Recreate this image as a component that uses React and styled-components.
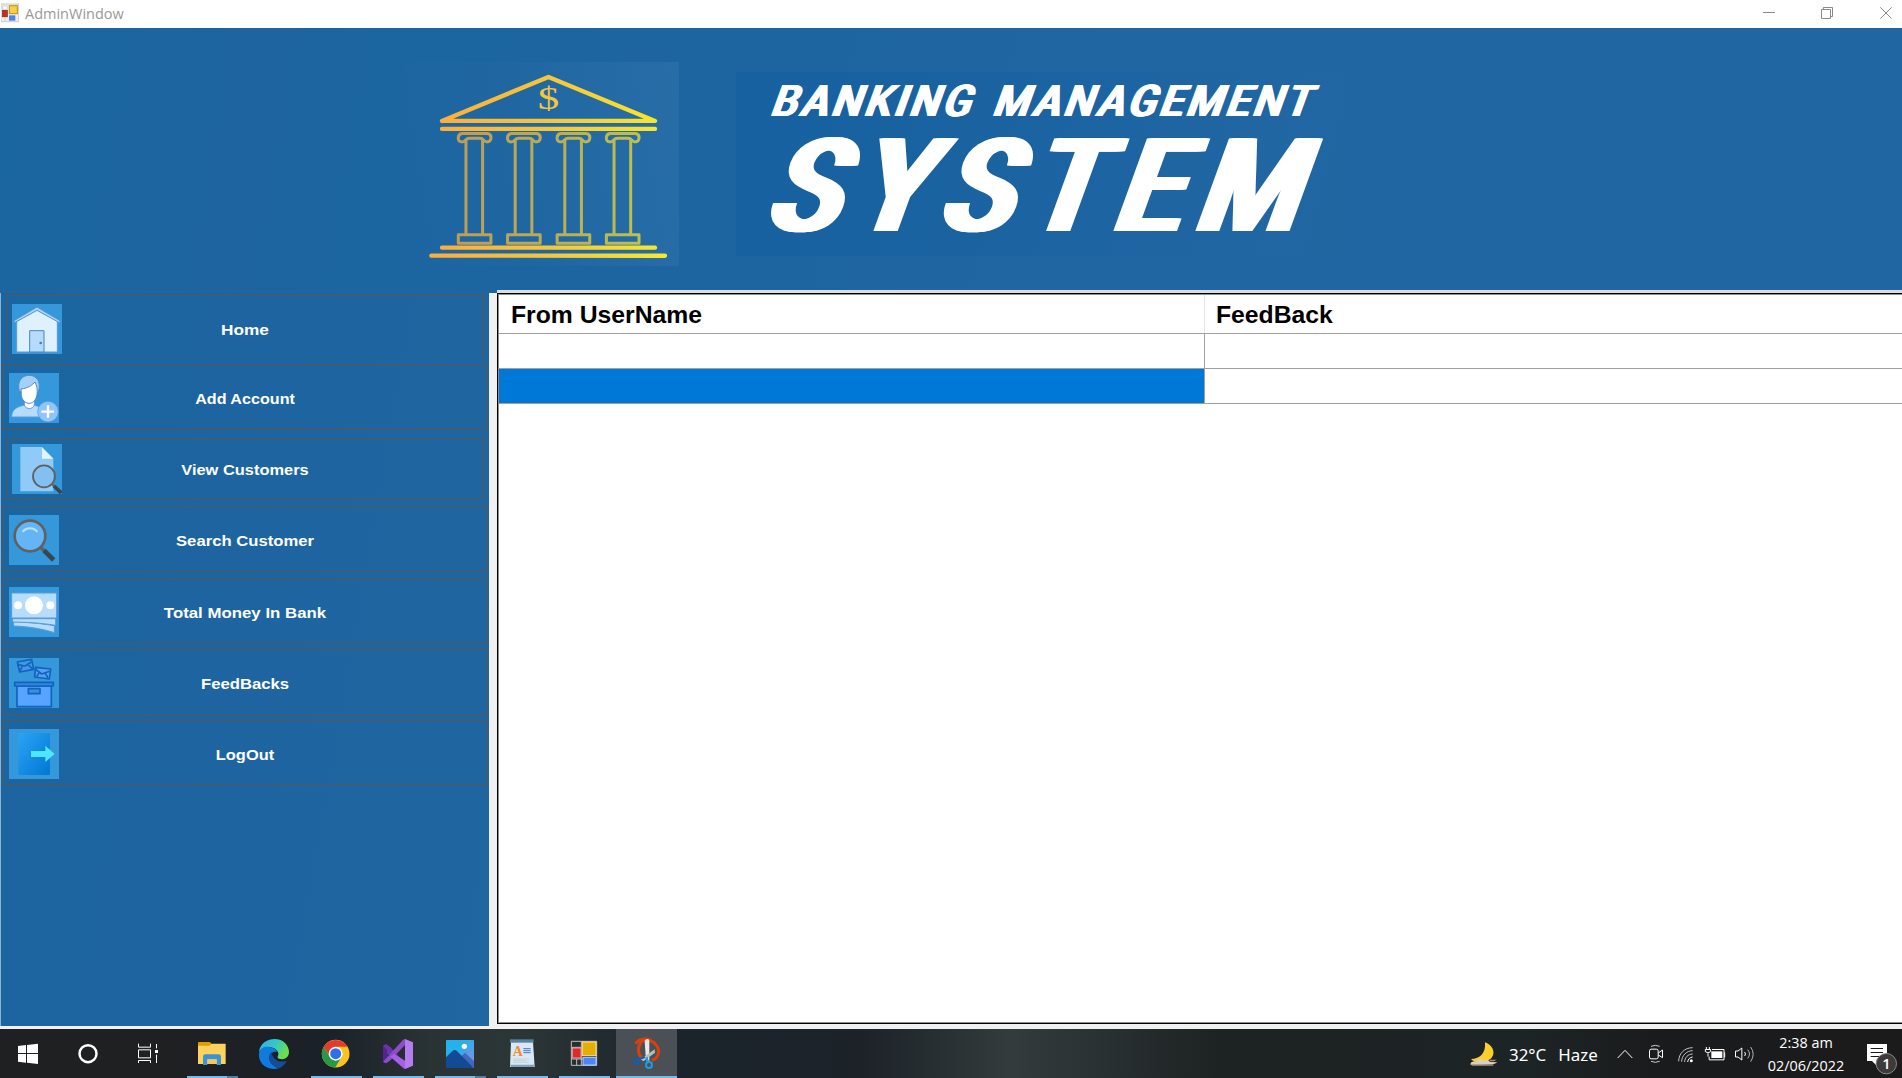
import React from "react";
import styled, { createGlobalStyle } from "styled-components";

const GlobalStyle = createGlobalStyle`
  html, body { margin: 0; padding: 0; overflow: hidden; }
  * { box-sizing: border-box; }
`;

const Desktop = styled.div`
  width: 1902px;
  height: 1078px;
  display: flex;
  flex-direction: column;
  overflow: hidden;
  background: #f0f0f0;
  font-family: "Liberation Sans", Arial, sans-serif;
`;

const TitleBar = styled.header`
  height: 28px;
  flex: none;
  display: flex;
  align-items: flex-start;
  background: #fff;
  padding-left: 1px;
`;

const TitleText = styled.span`
  margin-left: 6px;
  flex: 1;
  font: 400 14.5px/27px "Open Sans", "Noto Sans", sans-serif;
  color: #999;
`;

const Banner = styled.section`
  height: 262px;
  flex: none;
  display: flex;
  align-items: flex-start;
  padding: 34px 0 0 404px;
  background: linear-gradient(100deg, #1a66a1 0%, #1d64a0 14%, #1b65a0 20%, #1c65a1 35%, #2066a2 60%, #2066a2 100%);
`;

const BankArt = styled.svg`
  width: 275px;
  height: 204px;
  flex: none;
  display: block;
  background: linear-gradient(80deg, #1c65a0, #2067a2 45%, #286da6);
`;

const TitlePanel = styled.div`
  margin: 10px 0 0 57px;
  width: 608px;
  height: 184px;
  padding: 14px 0 0 28px;
  background: linear-gradient(105deg, #1761a0, #1b63a1 50%, #2066a3 80%, #2067a2);
  color: #fff;
  font-family: Roboto, sans-serif;
  white-space: nowrap;
`;

const Skewed = styled.div`
  width: max-content;
  transform-origin: 0 100%;
  transform: skewX(-20deg) scaleX(${(p) => p.$sx});
`;

const TopLine = styled(Skewed)`
  margin-left: 5px;
  height: 31px;
  font-size: 43.6px;
  line-height: 31px;
  font-weight: 500;
  letter-spacing: 4.3px;
  word-spacing: 5px;
  text-shadow: 0.8px 0 #fff, 1.6px 0 #fff, -0.8px 0 #fff, -1.5px 0 #fff;
`;

const BigLine = styled(Skewed)`
  margin: 23px 0 0 -1px;
  height: 93px;
  font-size: 130px;
  line-height: 93px;
  font-weight: 500;
  letter-spacing: 18.5px;
  text-shadow: 2px 0 #fff, 4px 0 #fff, 5.5px 0 #fff, -2px 0 #fff, -4px 0 #fff, -5.5px 0 #fff;
`;

const Body = styled.main`
  height: 739px;
  flex: none;
  display: flex;
  background: linear-gradient(#1f66a1 0 3px, #f0f0f0 3px);
`;

const Sidebar = styled.nav`
  width: 489px;
  height: 733px;
  flex: none;
  margin-top: 3px;
  padding: 2px 0 0 2px;
  border-left: 1px solid #8fb2d0;
  background: linear-gradient(100deg, #1a65a0, #1d64a0 40%, #2066a1);
`;

const MenuButton = styled.button`
  display: grid;
  grid-template-columns: 50px 1fr 50px;
  align-items: start;
  width: ${(p) => (p.$inset ? 478 : 484)}px;
  height: ${(p) => p.$h}px;
  margin: ${(p) => p.$mt}px 0 0 ${(p) => (p.$inset ? 3 : 0)}px;
  padding: ${(p) => p.$pt}px 5px 0;
  border: 1px solid #585755;
  ${(p) => p.$open && "border-bottom-color: transparent;"}
  background: transparent;
  color: #fff;
`;

const MenuIcon = styled.svg`
  width: 50px;
  height: 50px;
  display: block;
  background: #3498db;
`;

const MenuLabel = styled.span`
  font: 700 15.5px/52px "Liberation Sans", Arial, sans-serif;
  text-align: center;
  white-space: nowrap;
  transform: scaleX(${(p) => p.$sx});
`;

const GridFrame = styled.section`
  flex: 1;
  height: 734px;
  margin-left: 8px;
  border-top: 3px solid #d9dee2;
`;

const GridEdge = styled.div`
  height: 731px;
  border: solid #000;
  border-width: 1px 0 1px 1px;
`;

const DataGrid = styled.div`
  height: 729px;
  border: solid #8c8c8c;
  border-width: 1px 0 1px 1px;
  background: #fff;
`;

const GridRow = styled.div`
  display: grid;
  grid-template-columns: 706px 1fr;
  height: ${(p) => (p.$head ? 39 : 35)}px;
  border-bottom: 1px solid #a0a0a0;
`;

const Cell = styled.div`
  background: ${(p) => (p.$selected ? "#0078d7" : "#fff")};
  border-right: ${(p) => (p.$last ? "0" : p.$head ? "1px solid #e5e5e5" : "1px solid #a0a0a0")};
  padding: 1px 0 0 ${(p) => (p.$last ? 11 : 12)}px;
  font: 700 24px/37px "Liberation Sans", Arial, sans-serif;
  color: #000;
`;

const HeadText = styled.span`
  display: block;
  width: max-content;
  height: 37px;
  transform-origin: 0 50%;
  transform: scaleX(1.03);
`;

const Taskbar = styled.footer`
  height: 49px;
  flex: none;
  display: flex;
  background: linear-gradient(90deg, #1f2021 0, #1e2022 180px, #1b2129 330px, #2a3334 430px, #2c3636 520px, #1b242c 660px, #1c2228 860px, #333b3c 1010px, #2a3132 1100px, #1d2222 1220px, #1d2425 1530px, #1a1b1c 1660px, #1b1b1c 1902px);
`;

const Slot = styled.div`
  width: ${(p) => p.$w}px;
  height: 49px;
  flex: none;
  margin-left: ${(p) => (p.$active ? 1 : 0)}px;
  display: flex;
  flex-direction: column;
  background: ${(p) => (p.$active ? "#4b5056" : "transparent")};
`;

const SlotIcon = styled.svg`
  width: 100%;
  height: 47px;
  display: block;
`;

const Underline = styled.div`
  height: 2px;
  width: ${(p) => (p.$full ? 61 : 51)}px;
  margin-left: ${(p) => (p.$full ? 0 : 6)}px;
  background: ${(p) => (p.$split ? "linear-gradient(90deg, #76b9ed 40px, #4f7da3 40px)" : "#76b9ed")};
`;

const Spacer = styled.div`
  flex: 1;
`;

const Weather = styled.div`
  display: flex;
  gap: 12px;
  width: 102px;
  font: 400 16.9px/49px "Noto Sans", "Open Sans", sans-serif;
  color: #fff;
  padding: 1px 0 0 1px;
  white-space: nowrap;
`;

const Clock = styled.div`
  width: 84px;
  padding-top: 2px;
  font: 400 14.4px/23px "Open Sans", "Noto Sans", sans-serif;
  color: #fff;
  text-align: center;
  white-space: nowrap;
`;

const WinFormsGlyph = ({ x = 0, y = 0 }) => (
  <g transform={`translate(${x} ${y})`}>
    <path d="M1 1H77V73H1ZM31 1V73M1 19H31M1 54H77M17 54V73" fill="none" stroke="#bdbdbd" strokeWidth="3" />
    <rect x="4" y="21" width="26" height="30" fill="#d92b2b" stroke="#e9a0a0" strokeWidth="3" />
    <rect x="34" y="3" width="41" height="41" fill="#e2ae08" stroke="#ffe28a" strokeWidth="3" />
    <rect x="36" y="49" width="39" height="23" fill="#4f86f7" stroke="#b5ccff" strokeWidth="3" />
  </g>
);

const column = (x) =>
  `M${x + 14} 250h76c16 2 14 25 0 25c-10 1-10-11-22-11h-32c-12 0-12 12-22 11c-16 0-14-23 0-25z` +
  `M${x + 26} 272V553M${x + 76} 272V553M${x + 3} 554h98v26h-98z`;

const BankLogo = () => (
  <BankArt viewBox="12 35 826 613">
    <defs>
      <linearGradient id="gold" gradientUnits="userSpaceOnUse" x1="90" y1="0" x2="800" y2="0">
        <stop offset="0" stopColor="#fcac3c" />
        <stop offset="0.5" stopColor="#f6c63a" />
        <stop offset="1" stopColor="#f6ea2c" />
      </linearGradient>
    </defs>
    <g fill="none" stroke="url(#gold)" strokeLinecap="round" strokeLinejoin="round">
      <path strokeWidth="13" d="M126 212L446 80L766 212H126.1M126 236H766.1M126 593H766.1" />
      <path strokeWidth="13" d="M94 617L796 617.1" />
      <path strokeWidth="9" opacity="0.72" d={[172, 320, 469, 617].map(column).join("")} />
    </g>
    <text x="446" y="177" textAnchor="middle" fontFamily="Liberation Serif, serif" fontSize="92" transform="translate(446 0) scale(1.4 1) translate(-446 0)" fill="url(#gold)">$</text>
  </BankArt>
);

const icons = {
  home: (
    <>
      <path d="M14 50L75 14L136 50V144H14Z" fill="#dff0ff" stroke="#5b9bdc" strokeWidth="3" />
      <path d="M6 50L75 9L144 50V57L75 19L6 57Z" fill="#a9d3fb" stroke="#5291d3" strokeWidth="3" />
      <path d="M53 144V80H96V144Z" fill="#b5dbff" stroke="#4586c8" strokeWidth="3" />
      <circle cx="86" cy="117" r="4" fill="#3f7fc4" />
    </>
  ),
  add: (
    <>
      <path d="M8 132C8 112 20 102 44 97H76C100 102 110 112 112 132Z" fill="#b5dbff" stroke="#5d9cdd" strokeWidth="3" />
      <path d="M46 80H76V96C72 110 50 110 46 96Z" fill="#fff" stroke="#5d9cdd" strokeWidth="3" />
      <path d="M31 56C22 22 42 6 62 7C82 8 98 24 88 58Z" fill="#a5d0f8" stroke="#4c8ccb" strokeWidth="3" />
      <path d="M36 48C56 46 70 36 78 27C84 38 86 50 84 66C80 84 70 91 60 91C48 90 40 82 37 68Z" fill="#fff" stroke="#4c8ccb" strokeWidth="3" />
      <circle cx="117" cy="116" r="31" fill="#8fc5fa" stroke="#4b97dc" strokeWidth="2" />
      <path d="M97 116H135M117 97V134" stroke="#fff" strokeWidth="7" />
    </>
  ),
  view: (
    <>
      <path d="M25 9H90L124 43V142H25Z" fill="#90caf9" />
      <path d="M90 10L123 44H90Z" fill="#e1f5fe" />
      <path d="M120 120L129 130" stroke="#616161" strokeWidth="7" />
      <path d="M126 126L148 147" stroke="#37474f" strokeWidth="11" />
      <circle cx="96" cy="97" r="33" fill="#7db8ec" fillOpacity="0.6" stroke="#616161" strokeWidth="5.5" />
    </>
  ),
  search: (
    <>
      <path d="M92 94L106 108" stroke="#616161" strokeWidth="10" />
      <path d="M105 106L134 135" stroke="#37474f" strokeWidth="14" />
      <circle cx="63" cy="63" r="46" fill="#64b5f6" stroke="#616161" strokeWidth="8" />
      <path d="M42 49C53 37 73 37 84 49" fill="none" stroke="#bbdefb" strokeWidth="6" strokeLinecap="round" />
    </>
  ),
  money: (
    <>
      <g fill="#b6dcfe" stroke="#5a9adb" strokeWidth="3">
        <path d="M14 104C62 106 108 111 136 116V137C110 128 60 118 14 117Z" />
        <path d="M11 95H140V115C90 107 50 106 11 105Z" />
        <path d="M8 18H143V93H8Z" />
      </g>
      <g fill="#fff">
        <circle cx="75" cy="55" r="27" />
        <circle cx="27" cy="55" r="12" />
        <circle cx="124" cy="55" r="12" />
      </g>
    </>
  ),
  feedback: (
    <g stroke="#1163bd" strokeWidth="5" strokeLinejoin="round">
      <path d="M25 12L68 4L74 34L32 42Z" fill="#4499e4" />
      <path d="M27 20L48 24L67 12M34 38L40 24M71 33L56 19" fill="none" />
      <path d="M80 28L125 33L121 63L77 57Z" fill="#55a0f2" />
      <path d="M80 34L98 48L122 40M83 56L91 43M117 60L109 46" fill="none" />
      <path d="M24 84H127V146H24Z" fill="#56a4ff" />
      <path d="M17 73H133V84H17Z" fill="#2e88d8" />
      <path d="M58 92H93V107H58Z" fill="#3b8fdd" />
    </g>
  ),
  logout: (
    <>
      <defs>
        <linearGradient id="door" x1="0" y1="0" x2="1" y2="1">
          <stop offset="0" stopColor="#2ba4f5" />
          <stop offset="1" stopColor="#0077d4" />
        </linearGradient>
      </defs>
      <rect x="28" y="12" width="95" height="126" rx="4" fill="url(#door)" />
      <path d="M66 66H109V50L137 75L109 99V84H66Z" fill="#50e6ff" />
    </>
  ),
};

const menu = [
  { label: "Home", icon: "home", h: 65, mt: 0, pt: 8, sx: 1.11, inset: true, open: true },
  { label: "Add Account", icon: "add", h: 66, mt: 4, pt: 8, sx: 1.04 },
  { label: "View Customers", icon: "view", h: 61, mt: 8, pt: 5, sx: 1.06, inset: true },
  { label: "Search Customer", icon: "search", h: 66, mt: 7, pt: 8, sx: 1.075 },
  { label: "Total Money In Bank", icon: "money", h: 66, mt: 6, pt: 8, sx: 1.085 },
  { label: "FeedBacks", icon: "feedback", h: 66, mt: 5, pt: 8, sx: 1.075 },
  { label: "LogOut", icon: "logout", h: 66, mt: 5, pt: 8, sx: 1.06 },
];

const apps = [
  {
    name: "explorer", x: 543, line: true, split: true,
    art: (
      <>
        <path d="M594 98Q594 96 597 96H629L635 101V112H594Z" fill="#e19c00" />
        <path d="M594 107H628L635 101H677V162H594Z" fill="#ffd25e" />
        <path d="M609 165V140Q609 133 616 133H656Q663 133 663 140V165H650V148H622V165Z" fill="#3a92d9" />
        <path d="M622 148H650V162H622Z" fill="#f5c857" />
      </>
    ),
  },
  {
    name: "edge", x: 729,
    art: (
      <>
        <defs>
          <linearGradient id="edgeTop" x1="0" y1="0" x2="1" y2="0.4">
            <stop offset="0" stopColor="#2fb0ef" />
            <stop offset="0.55" stopColor="#34c6c8" />
            <stop offset="1" stopColor="#6be04a" />
          </linearGradient>
        </defs>
        <path d="M777 125C781 98 803 87 824 87C850 87 867 106 867 126C867 143 852 151 837 146C828 143 836 139 835 130C832 113 802 102 777 125Z" fill="url(#edgeTop)" />
        <path d="M777 130C780 112 798 108 812 112C824 115 832 122 830 126C818 121 803 134 810 152C816 166 828 173 839 174C800 185 774 160 777 130Z" fill="#0f7bdc" />
        <path d="M814 126C800 140 807 170 839 174C848 170 857 161 860 152C840 160 818 150 814 126Z" fill="#114e9c" />
      </>
    ),
  },
  {
    name: "chrome", x: 915, line: true,
    art: (
      <>
        <circle cx="1007" cy="131" r="41.500" fill="#fcc31e" />
        <path d="M971 110L990 142L1007 150L1004 172.500A41.500 41.500 0 0 1 971 110Z" fill="#279847" />
        <path d="M971 110.500A41.500 41.500 0 0 1 1043 110.500H1007L990 141Z" fill="#e33b2e" />
        <path d="M1024 141L1006 172.500L990 141Z" fill="#279847" />
        <circle cx="1007" cy="131" r="21" fill="#fff" />
        <circle cx="1007" cy="131" r="16.500" fill="#2f6fea" />
      </>
    ),
  },
  {
    name: "visual-studio", x: 1101, line: true,
    art: (
      <g transform="translate(1050 0)">
        <path d="M99 107L108 102L121 111L170 164L166 177Q162 177 160 174L112 131V141L121 151L108 160L99 155Z" fill="#6a34ad" />
        <path d="M99 155L108 160L121 151L166 104V87Q162 87 158 91Z" fill="#8e4cc9" />
        <path d="M99 107V155L111 142V119Z" fill="#51258f" />
        <path d="M165 87L189 97V167L165 177Z" fill="#b57cf0" />
        <path d="M160 174L165 177V152L132 131L121 140Z" fill="#a660e8" />
      </g>
    ),
  },
  {
    name: "photos", x: 1287, line: true, split: true,
    art: (
      <g transform="translate(1050 0)">
        <defs>
          <linearGradient id="sky" x1="0" y1="0" x2="1" y2="1">
            <stop offset="0.4" stopColor="#27b0ee" />
            <stop offset="0.85" stopColor="#7f8fe0" />
          </linearGradient>
        </defs>
        <rect x="288" y="90" width="84" height="84" rx="2" fill="url(#sky)" />
        <path d="M320 152L345 128L372 154V174H320Z" fill="#4068bd" />
        <path d="M288 142L308 122Q314 118 320 122L368 171V174H288Z" fill="#124b93" />
        <circle cx="343" cy="109" r="8" fill="#fff6e8" />
      </g>
    ),
  },
  {
    name: "wordpad", x: 1473, line: true,
    art: (
      <g transform="translate(1050 0)">
        <path d="M483 96H549L554 171H480Z" fill="#d8e9f6" />
        <path d="M480 88H551V98H480Z" fill="#57809f" />
        <path d="M480 164H555L551 171H483Z" fill="#7fa3bd" />
        <text x="488" y="137" fontFamily="Liberation Serif, serif" fontWeight="700" fontSize="42" fill="#f58a2c">A</text>
        <path d="M520 116H542M520 122H542M520 128H542" stroke="#4676bd" strokeWidth="3" />
        <path d="M489 147H538M489 152H530M489 157H536" stroke="#b9c6d0" strokeWidth="2" />
      </g>
    ),
  },
  {
    name: "winforms", x: 1659, line: true,
    art: <WinFormsGlyph x={1713} y={93} />,
  },
  {
    name: "snip", x: 1848, w: 61, line: true, active: true,
    art: (
      <g transform="translate(1050 0)">
        <path d="M858 102C862 88 886 84 902 92C920 100 930 118 924 134C920 144 914 149 905 150M874 98C862 108 862 132 876 144" fill="none" stroke="#d8400c" strokeWidth="9" />
        <path d="M866 98C876 88 890 88 902 93" fill="none" stroke="#d8400c" strokeWidth="13" />
        <path d="M884 92C889 84 897 86 898 92L898 152H888Z" fill="#e8e8e8" />
        <path d="M914 118L915 128L880 154L872 148Z" fill="#b9bcbf" />
        <circle cx="861" cy="153" r="8" fill="none" stroke="#0f5fae" strokeWidth="6" />
        <path d="M868 147L884 141" stroke="#0f5fae" strokeWidth="7" />
        <circle cx="897" cy="165" r="9" fill="none" stroke="#1e9be6" strokeWidth="6" />
        <path d="M893 157L890 142" stroke="#1e9be6" strokeWidth="7" />
      </g>
    ),
  },
];

export default function App() {
  return (
    <>
      <GlobalStyle />
      <Desktop>
        <TitleBar>
          <svg width="18" height="28" viewBox="3 0 54 84">
            <rect x="3" y="12" width="53" height="53" fill="#eee" stroke="#ccc" strokeWidth="3" />
            <path d="M8 52H24M15 52V63M8 18H22V28H8Z" stroke="#c4c4c4" strokeWidth="2" fill="#fff" />
            <rect x="7" y="31" width="15" height="19" fill="#c22f26" stroke="#8f1e18" strokeWidth="2" />
            <rect x="28" y="17" width="24" height="24" fill="#f8cf45" stroke="#c09112" strokeWidth="3" />
            <rect x="27" y="46" width="19" height="16" fill="#4b84e6" />
          </svg>
          <TitleText>AdminWindow</TitleText>
          <svg width="202" height="28" viewBox="0 0 606 84" fill="none" stroke="#8a8a8a" strokeWidth="3">
            <path d="M189 37.500H225M364.500 28.500H391.500V55.500H364.500ZM370 22.500H397.500V49M370 22V28M391 49.500H398M541 22L575 56M575 22L541 56" />
          </svg>
        </TitleBar>

        <Banner>
          <BankLogo />
          <TitlePanel>
            <TopLine $sx={0.932}>BANKING MANAGEMENT</TopLine>
            <BigLine $sx={0.89}>SYSTEM</BigLine>
          </TitlePanel>
        </Banner>

        <Body>
          <Sidebar>
            {menu.map((m) => (
              <MenuButton key={m.label} $h={m.h} $mt={m.mt} $pt={m.pt} $inset={m.inset} $open={m.open}>
                <MenuIcon viewBox="0 0 150 150">{icons[m.icon]}</MenuIcon>
                <MenuLabel $sx={m.sx}>{m.label}</MenuLabel>
              </MenuButton>
            ))}
          </Sidebar>
          <GridFrame>
            <GridEdge>
              <DataGrid>
                <GridRow $head>
                  <Cell $head><HeadText>From UserName</HeadText></Cell>
                  <Cell $head $last><HeadText>FeedBack</HeadText></Cell>
                </GridRow>
                <GridRow>
                  <Cell />
                  <Cell $last />
                </GridRow>
                <GridRow>
                  <Cell $selected />
                  <Cell $last />
                </GridRow>
              </DataGrid>
            </GridEdge>
          </GridFrame>
        </Body>

        <Taskbar>
          <Slot $w={58}>
            <SlotIcon viewBox="0 57 174 141">
              <path fill="#fff" d="M54 108L78 105V129H54ZM81 105L114 101V129H81ZM54 132H78V158L54 155ZM81 132H114V162L81 158Z" />
            </SlotIcon>
          </Slot>
          <Slot $w={60}>
            <SlotIcon viewBox="174 57 180 141">
              <circle cx="264" cy="131" r="25.500" fill="none" stroke="#fff" strokeWidth="7.500" />
            </SlotIcon>
          </Slot>
          <Slot $w={63}>
            <SlotIcon viewBox="354 57 189 141">
              <path fill="none" stroke="#fff" strokeWidth="3" d="M415.500 101V111.500H451.500V101M415.500 119.500H451.500V143.500H415.500ZM415.500 159V151.500H451.500V159M469.500 102V115M469.500 134V159" />
              <rect x="465" y="120" width="9" height="9" fill="#fff" />
            </SlotIcon>
          </Slot>
          {apps.map((a) => (
            <Slot key={a.name} $w={a.w || 62} $active={a.active}>
              <SlotIcon viewBox={`${a.x} 57 ${(a.w || 62) * 3} 141`}>{a.art}</SlotIcon>
              {a.line && <Underline $split={a.split} $full={a.active} />}
            </Slot>
          ))}
          <Spacer />
          <Slot $w={40}>
            <SlotIcon viewBox="48 57 120 141">
              <path d="M99 97C130 108 133 142 107 152C90 160 66 158 57 147C84 147 102 130 99 97Z" fill="#fcd02c" />
              <path d="M56 163C54 156 66 152 74 154C78 144 92 146 96 152C102 146 112 150 114 156L136 157C130 163 110 166 56 165Z" fill="#dccfbd" />
              <path d="M112 149H134L126 154H114ZM56 163H124V167H60Z" fill="#a58f7c" />
            </SlotIcon>
          </Slot>
          <Weather>
            <span>32°C</span>
            <span>Haze</span>
          </Weather>
          <Slot $w={154}>
            <SlotIcon viewBox="474 57 462 141" fill="none" stroke="#fff" strokeWidth="3">
              <path d="M497 144L519 121L541 144" />
              <path d="M597 109Q610 103 623 109M597 154Q610 160 623 154" stroke="#ccc" />
              <rect x="592.500" y="117.500" width="26" height="29" rx="5" />
              <path d="M619 129L631.500 120V143L619 135" />
              <path d="M680 154C680 130 698 113 722 113M689 155C689 137 704 122 722 122M698 156C698 143 708 132 722 132" stroke="#c4c4c4" />
              <path d="M707 156C708 148 713 142 722 141" />
              <circle cx="718" cy="152" r="4.500" fill="#fff" stroke="none" />
              <path d="M780 118.500H816V149.500H771.500V140M818 127V142" />
              <rect x="778" y="124" width="33" height="20" fill="#fff" stroke="none" />
              <path d="M763 111V118M772 111V118M760 118.500H776V125Q768 132 760 125ZM768 130V140" />
              <path d="M850.500 123H858L869.500 114V150L858 141H850.500Z" />
              <path d="M878 126Q883 132 878 138" />
              <path d="M887 119Q898 132 887 145M896 111Q911 132 896 155" stroke="#b4b4b4" />
            </SlotIcon>
          </Slot>
          <Clock>
            <div>2:38 am</div>
            <div>02/06/2022</div>
          </Clock>
          <Slot $w={54}>
            <SlotIcon viewBox="1188 57 162 141">
              <path d="M1245 102H1305V153H1272L1272 165L1260 153H1245Z" fill="#fff" />
              <path d="M1256 115.500H1293M1256 127.500H1293M1256 139.500H1281" stroke="#1b1b1c" strokeWidth="3" />
              <circle cx="1303" cy="161" r="30.500" fill="#3b3b3c" stroke="#8a8a8a" strokeWidth="3" />
              <text x="1303" y="177" textAnchor="middle" fontFamily="Open Sans, sans-serif" fontWeight="600" fontSize="44" fill="#fff">1</text>
            </SlotIcon>
          </Slot>
        </Taskbar>
      </Desktop>
    </>
  );
}
